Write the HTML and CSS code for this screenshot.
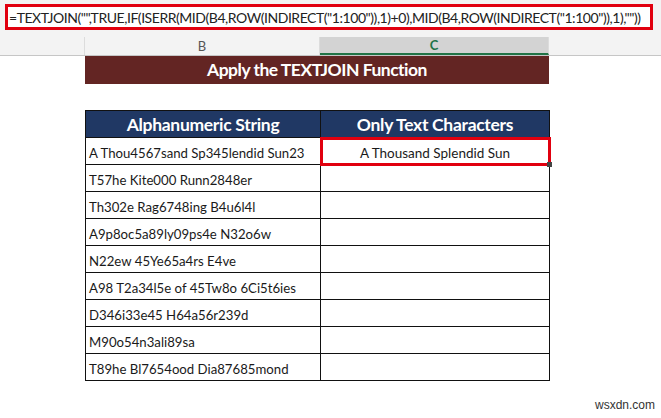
FILE: index.html
```html
<!DOCTYPE html>
<html lang="en">
<head>
    <meta charset="UTF-8">
    <title>Apply the TEXTJOIN Function</title>
    <link rel="stylesheet" href="styles.css">
</head>
<body>
    <div class="formula-bar">
        <div class="formula-box">=TEXTJOIN("",TRUE,IF(ISERR(MID(B4,ROW(INDIRECT("1:100")),1)+0),MID(B4,ROW(INDIRECT("1:100")),1),""))</div>
    </div>

    <div class="col-headers">
        <div class="col-h corner"></div>
        <div class="col-h">B</div>
        <div class="col-h active">C</div>
        <div class="col-h rest"></div>
    </div>

    <div class="sheet">
        <div class="title">Apply the TEXTJOIN Function</div>

        <table class="data">
            <colgroup>
                <col class="col-b">
                <col class="col-c">
            </colgroup>
            <thead>
                <tr>
                    <th>Alphanumeric String</th>
                    <th>Only Text Characters</th>
                </tr>
            </thead>
            <tbody>
                <tr>
                    <td>A Thou4567sand Sp345lendid Sun23</td>
                    <td class="result selected">A Thousand Splendid Sun<span class="handle"></span></td>
                </tr>
                <tr><td>T57he Kite000 Runn2848er</td><td></td></tr>
                <tr><td>Th302e Rag6748ing B4u6l4l</td><td></td></tr>
                <tr><td>A9p8oc5a89ly09ps4e N32o6w</td><td></td></tr>
                <tr><td>N22ew 45Ye65a4rs E4ve</td><td></td></tr>
                <tr><td>A98 T2a34l5e of 45Tw8o 6Ci5t6ies</td><td></td></tr>
                <tr><td>D346i33e45 H64a56r239d</td><td></td></tr>
                <tr><td>M90o54n3ali89sa</td><td></td></tr>
                <tr><td>T89he Bl7654ood Dia87685mond</td><td></td></tr>
            </tbody>
        </table>
    </div>

    <div class="watermark">wsxdn.com</div>
</body>
</html>
```

FILE: styles.css
```css
body {
    margin: 0;
    width: 661px;
    height: 418px;
    position: relative;
    overflow: hidden;
    background-color: #fff;
    font-family: 'Lato', 'Liberation Sans', sans-serif;
    color: #1a1a1a;
}

/* formula bar */
.formula-bar {
    background-color: #f3f3f3;
    padding: 4px 8px 7px 5px;
}

.formula-box {
    height: 20px;
    line-height: 21px;
    border: 3px solid #e1000f;
    background-color: #fff;
    padding: 0 0 0 1px;
    font-size: 14px;
    letter-spacing: -0.45px;
    color: #222;
    white-space: nowrap;
    overflow: hidden;
}

/* column headers */
.col-headers {
    display: grid;
    grid-template-columns: 85px 235px 229px 1fr;
    height: 18px;
    border-bottom: 1px solid #c6c6c6;
    background-color: #f3f3f3;
}

.col-h {
    display: flex;
    justify-content: center;
    align-items: center;
    font-size: 13px;
    color: #555;
    border-right: 1px solid #dcdcdc;
}

.col-h.active {
    background-color: #d3d3d3;
    color: #217346;
    font-weight: bold;
    border-bottom: 2px solid #217346;
}

.col-h.rest {
    border-right: none;
}

/* sheet */
.sheet {
    padding-left: 85px;
}

.title {
    width: 464px;
    height: 28px;
    line-height: 28px;
    background-color: #632523;
    color: #fff;
    font-weight: bold;
    font-size: 17.5px;
    letter-spacing: -0.5px;
    text-align: center;
    margin-bottom: 26px;
}

.data {
    border-collapse: collapse;
    width: 464px;
    table-layout: fixed;
}

.col-b {
    width: 235px;
}

.col-c {
    width: 229px;
}

.data th {
    height: 26px;
    padding: 0;
    background-color: #203864;
    color: #fff;
    font-size: 17.5px;
    letter-spacing: -0.3px;
    font-weight: bold;
    border: 1px solid #111;
}

.data td {
    height: 23px;
    padding: 3px 3px 0;
    font-size: 13.2px;
    border: 1px solid #111;
    white-space: nowrap;
}

.data td.result {
    text-align: center;
    font-size: 13.5px;
    position: relative;
}

.data td.selected {
    outline: 3px solid #e1000f;
    outline-offset: -2px;
}

.handle {
    position: absolute;
    right: -3px;
    bottom: -3px;
    width: 5px;
    height: 5px;
    background-color: #444;
}

.watermark {
    position: absolute;
    right: 6px;
    bottom: 6px;
    font-family: 'Liberation Sans', sans-serif;
    font-size: 12px;
    color: #333;
}
```
